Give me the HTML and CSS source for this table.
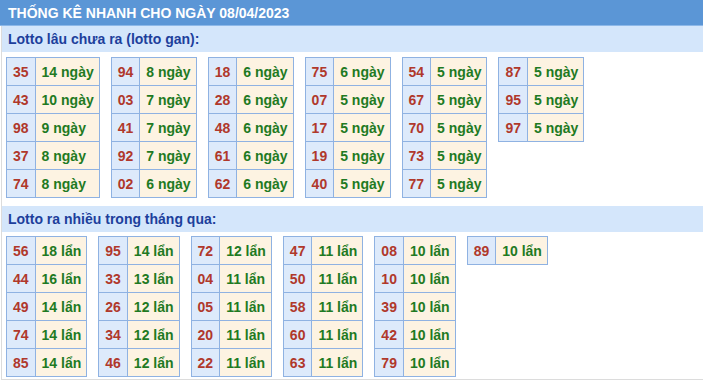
FILE: index.html
```html
<!DOCTYPE html>
<html lang="vi">
<head>
<meta charset="utf-8">
<title>Thống kê nhanh</title>
<link rel="stylesheet" href="styles.css">
</head>
<body>
<div class="box">
  <div class="title">THỐNG KÊ NHANH CHO NGÀY 08/04/2023</div>
  <div class="sub">Lotto lâu chưa ra (lotto gan):</div>
  <div class="tables">
    <table class="t"><tr><td class="n">35</td><td class="v">14 ngày</td></tr><tr><td class="n">43</td><td class="v">10 ngày</td></tr><tr><td class="n">98</td><td class="v">9 ngày</td></tr><tr><td class="n">37</td><td class="v">8 ngày</td></tr><tr><td class="n">74</td><td class="v">8 ngày</td></tr></table>
    <table class="t"><tr><td class="n">94</td><td class="v">8 ngày</td></tr><tr><td class="n">03</td><td class="v">7 ngày</td></tr><tr><td class="n">41</td><td class="v">7 ngày</td></tr><tr><td class="n">92</td><td class="v">7 ngày</td></tr><tr><td class="n">02</td><td class="v">6 ngày</td></tr></table>
    <table class="t"><tr><td class="n">18</td><td class="v">6 ngày</td></tr><tr><td class="n">28</td><td class="v">6 ngày</td></tr><tr><td class="n">48</td><td class="v">6 ngày</td></tr><tr><td class="n">61</td><td class="v">6 ngày</td></tr><tr><td class="n">62</td><td class="v">6 ngày</td></tr></table>
    <table class="t"><tr><td class="n">75</td><td class="v">6 ngày</td></tr><tr><td class="n">07</td><td class="v">5 ngày</td></tr><tr><td class="n">17</td><td class="v">5 ngày</td></tr><tr><td class="n">19</td><td class="v">5 ngày</td></tr><tr><td class="n">40</td><td class="v">5 ngày</td></tr></table>
    <table class="t"><tr><td class="n">54</td><td class="v">5 ngày</td></tr><tr><td class="n">67</td><td class="v">5 ngày</td></tr><tr><td class="n">70</td><td class="v">5 ngày</td></tr><tr><td class="n">73</td><td class="v">5 ngày</td></tr><tr><td class="n">77</td><td class="v">5 ngày</td></tr></table>
    <table class="t"><tr><td class="n">87</td><td class="v">5 ngày</td></tr><tr><td class="n">95</td><td class="v">5 ngày</td></tr><tr><td class="n">97</td><td class="v">5 ngày</td></tr></table>
  </div>
  <div class="sub sub2">Lotto ra nhiều trong tháng qua:</div>
  <div class="tables tables2">
    <table class="t"><tr><td class="n">56</td><td class="v">18 lẩn</td></tr><tr><td class="n">44</td><td class="v">16 lẩn</td></tr><tr><td class="n">49</td><td class="v">14 lẩn</td></tr><tr><td class="n">74</td><td class="v">14 lẩn</td></tr><tr><td class="n">85</td><td class="v">14 lẩn</td></tr></table>
    <table class="t"><tr><td class="n">95</td><td class="v">14 lẩn</td></tr><tr><td class="n">33</td><td class="v">13 lẩn</td></tr><tr><td class="n">26</td><td class="v">12 lẩn</td></tr><tr><td class="n">34</td><td class="v">12 lẩn</td></tr><tr><td class="n">46</td><td class="v">12 lẩn</td></tr></table>
    <table class="t"><tr><td class="n">72</td><td class="v">12 lẩn</td></tr><tr><td class="n">04</td><td class="v">11 lẩn</td></tr><tr><td class="n">05</td><td class="v">11 lẩn</td></tr><tr><td class="n">20</td><td class="v">11 lẩn</td></tr><tr><td class="n">22</td><td class="v">11 lẩn</td></tr></table>
    <table class="t"><tr><td class="n">47</td><td class="v">11 lẩn</td></tr><tr><td class="n">50</td><td class="v">11 lẩn</td></tr><tr><td class="n">58</td><td class="v">11 lẩn</td></tr><tr><td class="n">60</td><td class="v">11 lẩn</td></tr><tr><td class="n">63</td><td class="v">11 lẩn</td></tr></table>
    <table class="t"><tr><td class="n">08</td><td class="v">10 lẩn</td></tr><tr><td class="n">10</td><td class="v">10 lẩn</td></tr><tr><td class="n">39</td><td class="v">10 lẩn</td></tr><tr><td class="n">42</td><td class="v">10 lẩn</td></tr><tr><td class="n">79</td><td class="v">10 lẩn</td></tr></table>
    <table class="t"><tr><td class="n">89</td><td class="v">10 lẩn</td></tr></table>
  </div>
</div>
</body>
</html>
```
FILE: styles.css
```css
html, body {
  margin: 0;
  padding: 0;
  background: #ffffff;
}
body {
  font-family: "Liberation Sans", Arial, sans-serif;
  font-size: 14px;
}
.box {
  width: 720px;
  border-left: 1px solid #dcdcdc;
  border-bottom: 1px solid #dcdcdc;
  margin-left: 1px;
  padding-bottom: 2px;
}
.title {
  margin-left: -2px;
  height: 25px;
  line-height: 26px;
  background: #5b96d6;
  color: #ffffff;
  font-weight: bold;
  font-size: 14px;
  padding-left: 8px;
  border-bottom: 1px solid #8db8e8;
}
.sub {
  height: 26px;
  line-height: 26px;
  background: #d4e6fb;
  color: #1d3f9c;
  font-weight: bold;
  font-size: 14px;
  padding-left: 6px;
}
.tables {
  display: flex;
  align-items: flex-start;
  gap: 11px;
  padding: 5px 4px 8px;
}
.tables2 {
  padding: 4px 4px 0;
}
.t {
  border-collapse: collapse;
  border: 1px solid #8fb2e2;
}
.t td {
  border: 1px solid #8fb2e2;
  height: 27px;
  font-weight: bold;
  white-space: nowrap;
}
.t .n {
  padding: 0 6px;
  background: #ddeafb;
  color: #b0382b;
  text-align: center;
}
.t .v {
  padding: 0 5px 0 6px;
  background: #fdf3e2;
  color: #1f7a23;
}
```
